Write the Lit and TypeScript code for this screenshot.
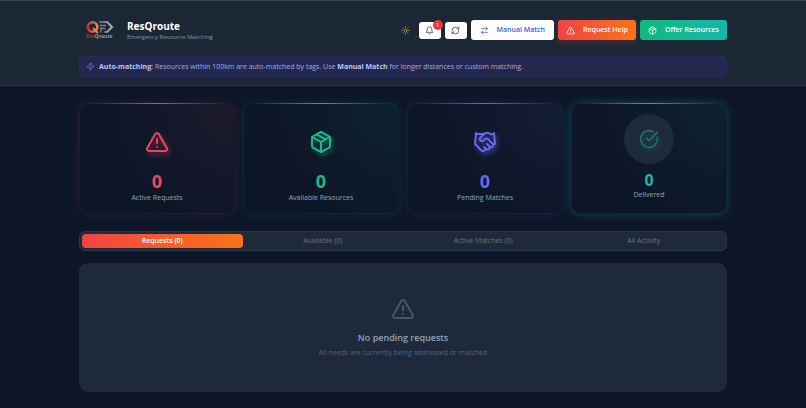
import { LitElement, html, svg, css } from "lit";
import { customElement, property, state } from "lit/decorators.js";

const icons = {
  alert: svg`<path d="m21.73 18-8-14a2 2 0 0 0-3.48 0l-8 14A2 2 0 0 0 4 21h16a2 2 0 0 0 1.73-3Z"/><path d="M12 9v4"/><path d="M12 17h.01"/>`,
  box: svg`<path d="m7.5 4.27 9 5.15"/><path d="M21 8a2 2 0 0 0-1-1.73l-7-4a2 2 0 0 0-2 0l-7 4A2 2 0 0 0 3 8v8a2 2 0 0 0 1 1.73l7 4a2 2 0 0 0 2 0l7-4A2 2 0 0 0 21 16Z"/><path d="m3.3 7 8.7 5 8.7-5"/><path d="M12 22V12"/>`,
  shake: svg`<path d="m11 17 2 2a1 1 0 1 0 3-3"/><path d="m14 14 2.5 2.5a1 1 0 1 0 3-3l-3.88-3.88a3 3 0 0 0-4.24 0l-.88.88a1 1 0 1 1-3-3l2.81-2.81a5.79 5.79 0 0 1 7.06-.87l.47.28a2 2 0 0 0 1.42.25L21 4"/><path d="m21 3 1 11h-2"/><path d="M3 3 2 14l6.5 6.5a1 1 0 1 0 3-3"/><path d="M3 4h8"/>`,
  check: svg`<path d="M21.8 10A10 10 0 1 1 17 3.34"/><path d="m9 11 3 3L22 4"/>`,
  sun: svg`<circle cx="12" cy="12" r="4"/><path d="M12 2v2M12 20v2M4.93 4.93l1.41 1.41M17.66 17.66l1.41 1.41M2 12h2M20 12h2M6.34 17.66l-1.41 1.41M19.07 4.93l-1.41 1.41"/>`,
  bell: svg`<path d="M6 8a6 6 0 0 1 12 0c0 7 3 9 3 9H3s3-2 3-9"/><path d="M10.3 21a1.94 1.94 0 0 0 3.4 0"/>`,
  refresh: svg`<path d="M3 12a9 9 0 0 1 9-9 9.75 9.75 0 0 1 6.74 2.74L21 8"/><path d="M21 3v5h-5"/><path d="M21 12a9 9 0 0 1-9 9 9.75 9.75 0 0 1-6.74-2.74L3 16"/><path d="M8 16H3v5"/>`,
  swap: svg`<path d="m16 3 4 4-4 4"/><path d="M20 7H4"/><path d="m8 21-4-4 4-4"/><path d="M4 17h16"/>`,
  zap: svg`<path d="M4 14a1 1 0 0 1-.78-1.63l9.9-10.2a.5.5 0 0 1 .86.46l-1.92 6.02A1 1 0 0 0 13 10h7a1 1 0 0 1 .78 1.63l-9.9 10.2a.5.5 0 0 1-.86-.46l1.92-6.02A1 1 0 0 0 11 14z"/>`,
};
type IconName = keyof typeof icons;

@customElement("line-icon")
class LineIcon extends LitElement {
  @property() name: IconName = "alert";
  static styles = css`
    :host { display: block; width: 9px; height: 9px; flex: none; }
    svg { display: block; width: 100%; height: 100%; fill: none; stroke: currentColor; stroke-width: 2; stroke-linecap: round; stroke-linejoin: round; overflow: visible; }
  `;
  render() {
    return html`<svg viewBox="0 0 24 24" aria-hidden="true">${icons[this.name]}</svg>`;
  }
}

@customElement("brand-logo")
class BrandLogo extends LitElement {
  static styles = css`
    :host { display: block; width: 30px; height: 20px; flex: none; }
    svg { display: block; width: 100%; height: 100%; overflow: visible; }
    .word { font: 700 5px "Open Sans", "Noto Sans", sans-serif; }
  `;
  render() {
    return html`<svg viewBox="0 0 30 20" role="img" aria-label="ResQroute logo">
      <defs>
        <linearGradient id="q" x1="0" y1="0" x2="1" y2="0"><stop offset="0" stop-color="#c83330"/><stop offset="1" stop-color="#e58a55"/></linearGradient>
        <linearGradient id="d" x1="0" y1="0" x2="1" y2="0"><stop offset="0" stop-color="#56636d"/><stop offset="1" stop-color="#aab4ba"/></linearGradient>
      </defs>
      <circle cx="7.500" cy="7" r="4.800" fill="none" stroke="url(#q)" stroke-width="2.6"/>
      <path d="M8 8l5 5" stroke="#e58a55" stroke-width="2"/>
      <path d="M14 2h8l5 5-5 5h-2.500" fill="none" stroke="url(#d)" stroke-width="2"/>
      <path d="M14.500 5.500h6.500M15 8.500h5.500M16 12.500v-5" fill="none" stroke="#74818a" stroke-width="1.300"/>
      <text class="word" x="1" y="18" fill="#a33435">Res<tspan fill="#909aa3">Qroute</tspan></text>
    </svg>`;
  }
}

interface Stat { icon: IconName; tone: string; value: number; label: string; halo?: boolean; }

@customElement("stat-card")
class StatCard extends LitElement {
  @property({ attribute: false }) stat!: Stat;
  static styles = css`
    :host { display: block; }
    .card {
      position: relative; height: 100%; box-sizing: border-box; min-height: 111px; border-radius: 10px;
      display: flex; flex-direction: column; align-items: center; justify-content: center;
      background: radial-gradient(circle at 100% 0, rgb(var(--tone) / 7%), transparent 65%), #0d1628;
      border: 1px solid rgb(var(--tone) / 7%);
      box-shadow: 0 0 10px rgb(var(--tone) / 14%);
      padding-top: 16px;
    }
    .card::before {
      content: ""; position: absolute; top: -1px; left: 6px; right: 6px; height: 1px;
      background: linear-gradient(90deg, transparent, rgb(var(--tone)), transparent);
    }
    .red { --tone: 244 63 94; --ink: #ee4562; }
    .green { --tone: 16 185 129; --ink: #1fb885; }
    .indigo { --tone: 99 102 241; --ink: #6d68e6; }
    .teal { --tone: 20 184 166; --ink: #22b3a2; box-shadow: 0 0 10px rgb(var(--tone) / 32%); }
    .icon { width: 24px; height: 24px; color: var(--ink); filter: drop-shadow(2px 3px 2px rgb(var(--tone) / 50%)); }
    .value { margin-top: 15px; font-size: 18px; line-height: 24px; font-weight: 700; color: var(--ink); }
    .label { font-size: 7px; line-height: 10px; font-weight: 500; color: #98a3b5; }
    .card.halo { padding-top: 0; padding-bottom: 4px; }
    .disc { width: 50px; height: 50px; border-radius: 50%; background: #1e293b; display: grid; place-items: center; }
    .disc .icon { width: 20px; height: 20px; opacity: .5; }
    .halo .value { margin-top: 6px; font-size: 16px; line-height: 20px; }
  `;
  render() {
    const s = this.stat;
    const icon = html`<line-icon class="icon" .name=${s.icon}></line-icon>`;
    return html`<article class="card ${s.tone} ${s.halo ? "halo" : ""}">
      ${s.halo ? html`<div class="disc">${icon}</div>` : icon}
      <div class="value">${s.value}</div>
      <div class="label">${s.label}</div>
    </article>`;
  }
}

@customElement("app-root")
class AppRoot extends LitElement {
  @state() private tab = 0;

  private stats: Stat[] = [
    { icon: "alert", tone: "red", value: 0, label: "Active Requests" },
    { icon: "box", tone: "green", value: 0, label: "Available Resources" },
    { icon: "shake", tone: "indigo", value: 0, label: "Pending Matches" },
    { icon: "check", tone: "teal", value: 0, label: "Delivered", halo: true },
  ];
  private tabs = ["Requests (0)", "Available (0)", "Active Matches (0)", "All Activity"];

  static styles = css`
    :host { display: block; min-height: 100vh; background: #0d1628; color: #fff; font-family: "Open Sans", "Noto Sans", sans-serif; font-size: 7px; line-height: 10px; }
    h1, h2, p { margin: 0; }
    button { font: inherit; border: 0; padding: 0; cursor: pointer; }
    header { background: #1c2736; border-top: 1px solid #36454f; border-bottom: 1px solid #293647; }
    .wrap { max-width: 648px; margin: 0 auto; padding: 0 16px; }
    .bar { display: flex; align-items: center; padding: 18px 0 15px; }
    .brand { display: flex; align-items: center; gap: 12px; padding-left: 6px; }
    h1 { font-size: 10px; line-height: 14px; font-weight: 700; }
    .sub { font-size: 6px; line-height: 8px; color: #8692a5; }
    .actions { margin-left: auto; display: flex; align-items: center; gap: 4px; }
    .theme { background: none; color: #c9a227; margin-right: 5px; }
    .square { position: relative; width: 22px; height: 17px; border-radius: 3px; background: #fff; color: #333c4b; display: grid; place-items: center; }
    .badge { position: absolute; top: -2px; right: -2px; width: 10px; height: 10px; border-radius: 50%; background: #e5383f; color: #fff; font-size: 6px; line-height: 10px; text-align: center; }
    .cta { height: 20px; border-radius: 3px; display: flex; align-items: center; gap: 8px; padding: 0 8px; font-weight: 600; color: #fff; white-space: nowrap; }
    .match { background: #fff; color: #3462dc; padding: 0 9px; }
    .help { background: linear-gradient(90deg, #ef4444, #f97316); box-shadow: 0 2px 6px rgb(239 68 68 / 25%); }
    .offer { background: linear-gradient(90deg, #10b981, #14b8a6); }
    .notice { display: flex; align-items: center; gap: 4px; height: 21px; box-sizing: border-box; padding: 0 6px; margin-bottom: 8px; border: 1px solid #292b5c; border-radius: 5px; background: #24284f; color: #a3aae6; }
    .notice line-icon { color: #7178e8; }
    .notice strong { color: #bcc4fb; font-weight: 700; }
    .stats { display: grid; grid-template-columns: repeat(4, 1fr); gap: 8px; padding-top: 17px; }
    .tabs { display: grid; grid-template-columns: repeat(4, 1fr); margin-top: 17px; padding: 2px; border: 1px solid #2a3749; border-radius: 6px; background: #1e293b; }
    .tab { height: 14px; border-radius: 4px; background: none; color: #6d737d; font-weight: 500; }
    .tab.on { background: linear-gradient(90deg, #ef4444, #f97316); color: #fff; font-weight: 600; }
    .panel { margin: 12px 0 16px; min-height: 129px; box-sizing: border-box; border-radius: 9px; background: #1e293b; display: flex; flex-direction: column; align-items: center; justify-content: center; text-align: center; }
    .panel line-icon { width: 24px; height: 24px; color: #475569; }
    h2 { margin-top: 10px; font-size: 9px; line-height: 14px; font-weight: 600; color: #94a3b8; }
    .panel p { margin-top: 3px; color: #56637a; }
  `;

  render() {
    return html`
      <header>
        <div class="wrap">
          <div class="bar">
            <div class="brand">
              <brand-logo></brand-logo>
              <div><h1>ResQroute</h1><p class="sub">Emergency Resource Matching</p></div>
            </div>
            <div class="actions">
              <button class="theme" aria-label="Toggle theme"><line-icon name="sun"></line-icon></button>
              <button class="square" aria-label="Notifications"><line-icon name="bell"></line-icon><span class="badge">1</span></button>
              <button class="square" aria-label="Refresh"><line-icon name="refresh"></line-icon></button>
              <button class="cta match"><line-icon name="swap"></line-icon>Manual Match</button>
              <button class="cta help"><line-icon name="alert"></line-icon>Request Help</button>
              <button class="cta offer"><line-icon name="box"></line-icon>Offer Resources</button>
            </div>
          </div>
          <div class="notice">
            <line-icon name="zap"></line-icon>
            <p><strong>Auto-matching:</strong> Resources within 100km are auto-matched by tags. Use <strong>Manual Match</strong> for longer distances or custom matching.</p>
          </div>
        </div>
      </header>
      <main class="wrap">
        <section class="stats">${this.stats.map((s) => html`<stat-card .stat=${s}></stat-card>`)}</section>
        <div class="tabs" role="tablist">
          ${this.tabs.map((t, i) => html`<button class="tab ${i === this.tab ? "on" : ""}" role="tab" aria-selected=${i === this.tab} @click=${() => (this.tab = i)}>${t}</button>`)}
        </div>
        <section class="panel">
          <line-icon name="alert"></line-icon>
          <h2>No pending requests</h2>
          <p>All needs are currently being addressed or matched</p>
        </section>
      </main>`;
  }
}
